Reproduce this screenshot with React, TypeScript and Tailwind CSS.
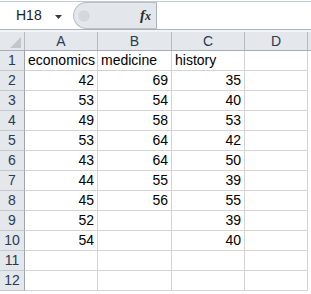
const cols = [
  { key: 'A', w: 'w-[73px]' },
  { key: 'B', w: 'w-[74px]' },
  { key: 'C', w: 'w-[73px]' },
  { key: 'D', w: 'w-[63px]' },
];

const rows: (string | number | null)[][] = [
  ['economics', 'medicine', 'history', null],
  [42, 69, 35, null],
  [53, 54, 40, null],
  [49, 58, 53, null],
  [53, 64, 42, null],
  [43, 64, 50, null],
  [44, 55, 39, null],
  [45, 56, 55, null],
  [52, null, 39, null],
  [54, null, 40, null],
  [null, null, null, null],
  [null, null, null, null],
];

export default function App() {
  return (
    <div className="w-[311px] h-[294px] bg-white overflow-hidden font-['Liberation_Sans',Arial,sans-serif] text-[14px] text-black">
      {/* formula bar */}
      <div className="h-[29px] border-t border-b border-t-[#c3c9d1] border-b-[#a9b1bb] mt-[1px] flex">
        <div className="w-[73px] flex items-center bg-white">
          <span className="ml-[16px] text-[14px] text-[#1b1b1b]">H18</span>
          <svg className="ml-[13px] mt-[2px]" width="7" height="4" viewBox="0 0 7 4">
            <path d="M0 0H7L3.5 4Z" fill="#3a3a3a" />
          </svg>
        </div>
        <div className="w-[84px] bg-[#e3e7ec] rounded-l-[14px] border border-[#b9c0c8] border-r-[#a9b1bb] flex items-center">
          <div className="ml-[3px] w-[14px] h-[14px] rounded-full bg-[#d5d9de] border border-[#eceef1]" />
          <span className="ml-auto mr-[5px] font-['Liberation_Serif',serif] italic font-bold text-[15px] text-[#2b2b2b]">
            f<span className="text-[12px]">x</span>
          </span>
        </div>
        <div className="flex-1 bg-white" />
      </div>
      <div className="h-[2px] bg-[#f2f4f6]" />

      {/* header row */}
      <div className="flex h-[19px] bg-[#e4e7eb] border-b border-[#a8adb3] text-[#2a3b52]">
        <div className="w-[25px] border-r border-[#b5bac0] relative">
          <svg className="absolute right-[3px] bottom-[2px]" width="11" height="11" viewBox="0 0 11 11">
            <path d="M11 0V11H0Z" fill="#c3c7cc" />
          </svg>
        </div>
        {cols.map((c) => (
          <div key={c.key} className={`${c.w} border-r border-[#b5bac0] flex items-center justify-center`}>
            {c.key}
          </div>
        ))}
      </div>

      {/* data rows */}
      {rows.map((r, i) => (
        <div key={i} className="flex h-[20px]">
          <div className="w-[25px] bg-[#e4e7eb] border-r border-r-[#9ea4aa] border-b border-b-[#c5c9ce] flex items-center justify-center text-[#2a3b52]">
            {i + 1}
          </div>
          {cols.map((c, j) => {
            const v = r[j];
            return (
              <div
                key={c.key}
                className={`${c.w} border-r border-b border-[#d4d4d4] flex items-center px-[3px] whitespace-nowrap ${
                  typeof v === 'number' ? 'justify-end' : 'justify-start'
                }`}
              >
                {v}
              </div>
            );
          })}
        </div>
      ))}
    </div>
  );
}
